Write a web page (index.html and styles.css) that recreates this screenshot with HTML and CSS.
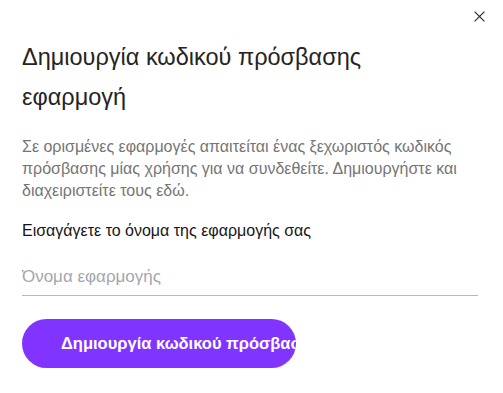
FILE: index.html
```html
<!DOCTYPE html>
<html lang="el">
<head>
<meta charset="utf-8">
<link rel="stylesheet" href="styles.css">
</head>
<body>
<div class="dialog">
  <button class="close" aria-label="Κλείσιμο">
    <svg width="11" height="11" viewBox="0 0 11 11"><path d="M0.6 0.6 L10.4 10.4 M10.4 0.6 L0.6 10.4" stroke="#323130" stroke-width="1.3" fill="none"/></svg>
  </button>
  <h1 class="title">Δημιουργία κωδικού πρόσβασης εφαρμογή</h1>
  <p class="desc">Σε ορισμένες εφαρμογές απαιτείται ένας ξεχωριστός κωδικός πρόσβασης μίας χρήσης για να συνδεθείτε. Δημιουργήστε και διαχειριστείτε τους εδώ.</p>
  <label class="label" for="app">Εισαγάγετε το όνομα της εφαρμογής σας</label>
  <input class="input" id="app" type="text" placeholder="Όνομα εφαρμογής">
  <div class="actions">
    <button class="primary"><span>Δημιουργία κωδικού πρόσβασης</span></button>
  </div>
</div>
</body>
</html>
```
FILE: styles.css
```css
* { box-sizing: border-box; }
html, body { margin: 0; padding: 0; background: #fff; }
body { font-family: "Liberation Sans", Arial, sans-serif; color: #323130; }
.dialog {
  position: relative;
  width: 503px;
  height: 393px;
  padding: 37px 25px 0 22px;
  display: flex;
  flex-direction: column;
  align-items: stretch;
}
.close {
  position: absolute;
  top: 11px;
  right: 18px;
  width: 11px;
  height: 11px;
  padding: 0;
  border: 0;
  background: transparent;
  display: flex;
}
.title {
  margin: 0;
  font-size: 23.5px;
  font-weight: 400;
  line-height: 40px;
  color: #252423;
  width: 380px;
}
.desc {
  margin: 19px 0 0;
  font-size: 16px;
  line-height: 22px;
  color: #757575;
}
.label {
  margin-top: 18px;
  font-size: 16px;
  line-height: 22px;
  color: #161616;
}
.input {
  margin-top: 24px;
  border: 0;
  border-bottom: 1px solid #b3b8c4;
  padding: 0 0 7px;
  font-family: inherit;
  font-size: 17px;
  line-height: 22px;
  color: #323130;
  outline: none;
  width: 456px;
}
.input::placeholder { color: #a3a6ae; }
.actions { margin-top: 23px; display: flex; }
.primary {
  width: 274px;
  height: 49px;
  border: 0;
  border-radius: 25px;
  background: #8133ff;
  color: #fff;
  font-family: inherit;
  font-weight: 700;
  font-size: 16.5px;
  padding: 0 0 0 39px;
  overflow: hidden;
  white-space: nowrap;
  text-align: left;
  display: flex;
  align-items: center;
}
```
